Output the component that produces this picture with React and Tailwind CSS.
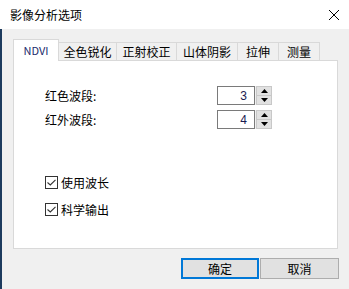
import React from 'react';

const font = { fontFamily: '"Noto Sans CJK SC", "Liberation Sans", sans-serif' };

function Tab({ label, active, w }) {
  if (active) {
    return (
      <div className={`h-[22px] ${w} bg-white border border-b-0 border-[#d9d9d9] flex items-start justify-center pt-[5px] text-[11px] leading-[11px] text-[#1a2a6c] relative z-10 -mb-px`}>
        {label}
      </div>
    );
  }
  return (
    <div className={`h-[18px] ${w} bg-[#f0f0f0] border border-b-0 border-l-0 border-[#d9d9d9] flex items-center justify-center text-[12px] leading-none text-black`}>
      {label}
    </div>
  );
}

function Spin({ value }) {
  return (
    <div className="flex items-stretch h-[19px]">
      <div className="w-[38px] border border-[#7a7a7a] bg-white flex items-center justify-end pr-[7px] text-[12px] leading-none text-[#1a1a50]" style={{ fontFamily: '"Liberation Sans", sans-serif' }}>
        {value}
      </div>
      <div className="w-[17px] flex flex-col bg-[#f0f0f0] pl-[1px]">
        <div className="flex-1 bg-[#e1e1e1] border border-[#c8c8c8] flex items-center justify-center">
          <svg width="7" height="4" viewBox="0 0 7 4"><path d="M3.5 0 L7 4 L0 4 Z" fill="#000" /></svg>
        </div>
        <div className="flex-1 bg-[#e1e1e1] border border-t-0 border-[#c8c8c8] flex items-center justify-center">
          <svg width="7" height="4" viewBox="0 0 7 4"><path d="M0 0 L7 0 L3.5 4 Z" fill="#000" /></svg>
        </div>
      </div>
    </div>
  );
}

function Check({ label }) {
  return (
    <div className="flex items-center gap-[3px]">
      <div className="w-[13px] h-[13px] border border-[#333] bg-white flex items-center justify-center">
        <svg width="9" height="7" viewBox="0 0 9 7"><path d="M0.5 3.5 L3.3 6 L8.5 0.8" fill="none" stroke="#333" strokeWidth="1.1" /></svg>
      </div>
      <span className="text-[12px] leading-none">{label}</span>
    </div>
  );
}

export default function App() {
  const tabs = [
    { label: 'NDVI', w: 'w-[46px]', active: true },
    { label: '全色锐化', w: 'w-[58px]' },
    { label: '正射校正', w: 'w-[60px]' },
    { label: '山体阴影', w: 'w-[61px]' },
    { label: '拉伸', w: 'w-[41px]' },
    { label: '测量', w: 'w-[41px]' },
  ];

  return (
    <div className="w-[349px] h-[289px] bg-[#f0f0f0] flex flex-col text-black overflow-hidden" style={font}>
      <div className="h-[29px] bg-white flex items-center justify-between pl-[10px] pr-[9px] shrink-0">
        <span className="text-[12px] leading-none">影像分析选项</span>
        <svg width="12" height="12" viewBox="0 0 12 12"><path d="M1 1 L11 11 M11 1 L1 11" stroke="#000" strokeWidth="1" /></svg>
      </div>

      <div className="flex-1 border-l-2 border-[#1d3b5e] flex flex-col">
        <div className="ml-[11px] mt-[10px] flex items-end h-[21px]">
          {tabs.map(t => <Tab key={t.label} {...t} />)}
        </div>

        <div className="ml-[11px] w-[325px] h-[189px] bg-white border border-[#d9d9d9] flex flex-col pl-[31px]">
          <div className="mt-[25px] flex flex-col gap-[5px] w-[227px]">
            <div className="flex items-center justify-between">
              <span className="text-[12px] leading-none">红色波段:</span>
              <Spin value="3" />
            </div>
            <div className="flex items-center justify-between">
              <span className="text-[12px] leading-none">红外波段:</span>
              <Spin value="4" />
            </div>
          </div>

          <div className="mt-[47px] flex flex-col gap-[14px]">
            <Check label="使用波长" />
            <Check label="科学输出" />
          </div>
        </div>

        <div className="flex justify-end gap-[1px] pr-[10px] mt-[9px]">
          <button className="w-[78px] h-[21px] bg-[#e1e1e1] border-2 border-[#0078d7] text-[12px] leading-none">确定</button>
          <button className="w-[79px] h-[21px] bg-[#e1e1e1] border border-[#adadad] text-[12px] leading-none">取消</button>
        </div>
      </div>
    </div>
  );
}
